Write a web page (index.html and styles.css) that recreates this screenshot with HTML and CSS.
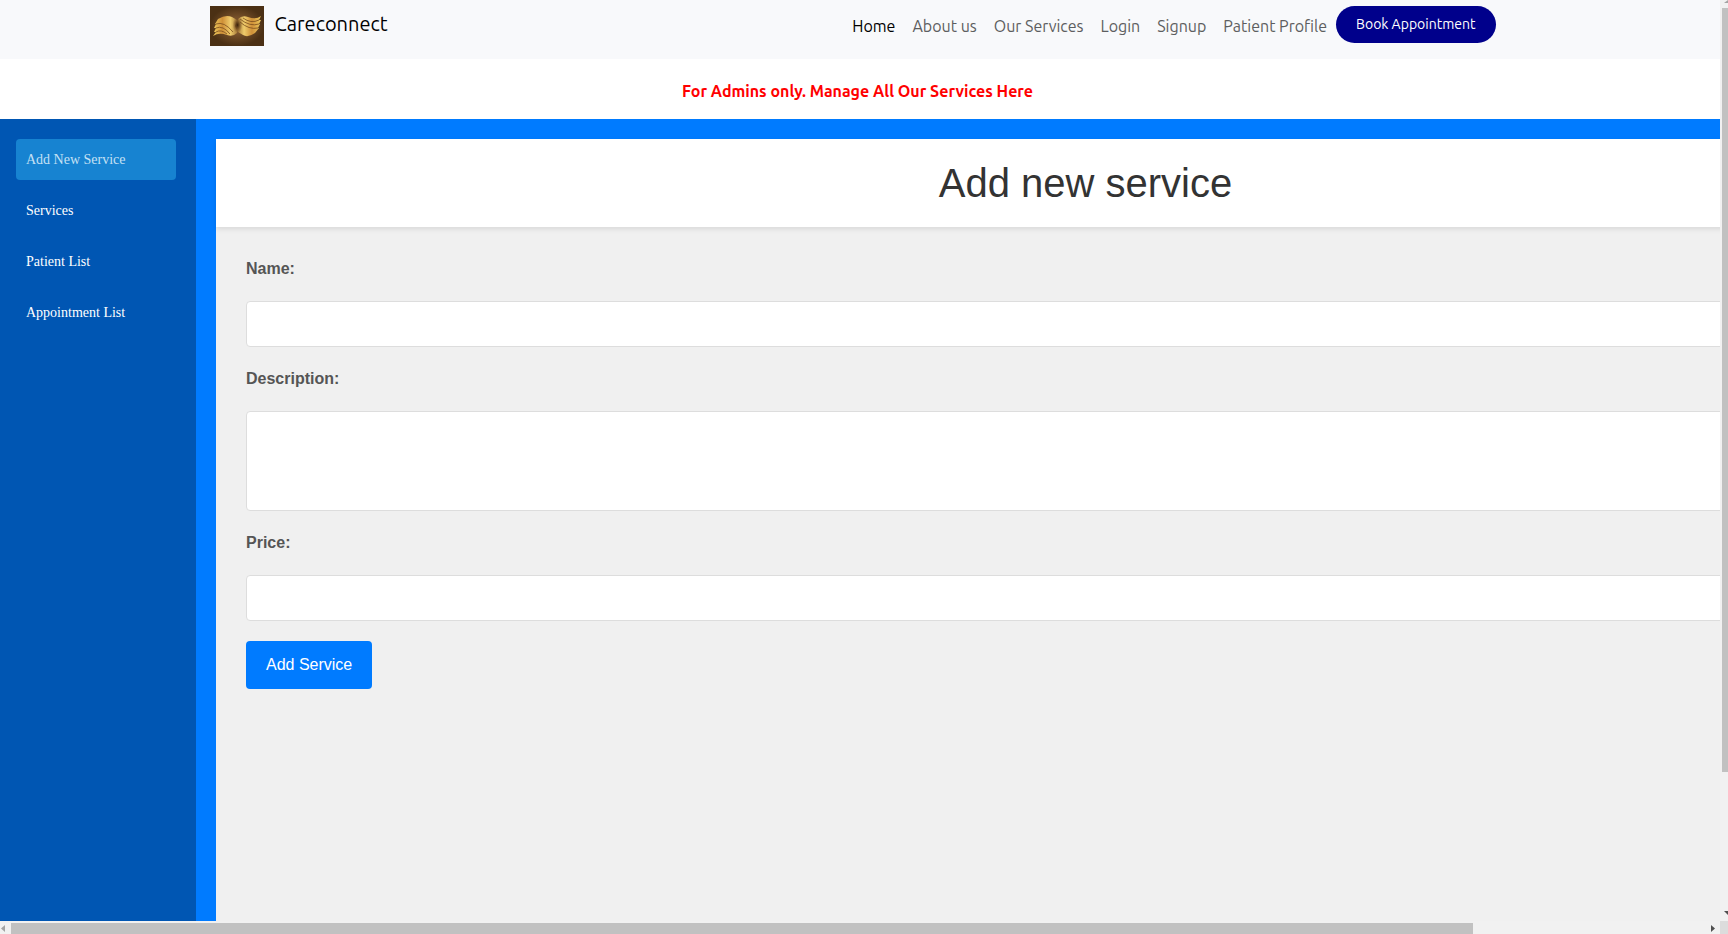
FILE: index.html
```html
<!DOCTYPE html>
<html lang="en">
<head>
<meta charset="utf-8">
<title>Careconnect - Add new service</title>
<link rel="stylesheet" href="styles.css">
</head>
<body>
<div class="window">
  <div class="page">
    <header class="topbar">
      <div class="topbar-inner">
        <a class="brand" href="#">
          <svg class="brand-logo" viewBox="0 0 54 40" aria-hidden="true">
            <defs>
              <radialGradient id="glow"><stop offset="0" stop-color="#96683a"/><stop offset="1" stop-color="#4b3014"/></radialGradient>
              <linearGradient id="gold" x1="0" y1="0" x2="1" y2="0"><stop offset="0" stop-color="#edc95c"/><stop offset=".35" stop-color="#cf9038"/><stop offset=".65" stop-color="#efcc6c"/><stop offset="1" stop-color="#8a5a26"/></linearGradient>
              <linearGradient id="gold-back" x1="1" y1="0" x2="0" y2="0"><stop offset="0" stop-color="#edc95c"/><stop offset=".35" stop-color="#cf9038"/><stop offset=".65" stop-color="#efcc6c"/><stop offset="1" stop-color="#8a5a26"/></linearGradient>
              <radialGradient id="fold"><stop offset="0" stop-color="#3a210b"/><stop offset="1" stop-color="#6b431b" stop-opacity="0"/></radialGradient>
            </defs>
            <rect width="54" height="40" fill="url(#glow)"/>
            <path d="M3 30 6 26 4 26 6 22 4 22 6 18 5 18 8 13Q16 8 22 11L27 14 30 20 27 27Q23 31 17 29 9 26 3 30Z" fill="url(#gold)"/>
            <path d="M51 10 49 14 51 14 49 18 50 18 48 22 49 22 45 27Q38 32 33 29L28 26 25 20 28 13Q32 9 38 11 46 14 51 10Z" fill="url(#gold-back)"/>
            <ellipse cx="27.500" cy="19" rx="5" ry="8" fill="url(#fold)"/>
            <path d="M6 18Q14 15 23 26M6 22Q13 19 20 28M6 26Q11 23 17 28M49 14Q41 18 33 12M49 18Q40 21 30 13M48 22Q39 24 30 16" fill="none" stroke="#7a4d1d" stroke-width=".8"/>
          </svg>
          <span>Careconnect</span>
        </a>
        <nav class="nav">
          <a class="nav-link active" href="#">Home</a>
          <a class="nav-link" href="#">About us</a>
          <a class="nav-link" href="#">Our Services</a>
          <a class="nav-link" href="#">Login</a>
          <a class="nav-link" href="#">Signup</a>
          <a class="nav-link" href="#">Patient Profile</a>
          <button class="book" type="button">Book Appointment</button>
        </nav>
      </div>
    </header>
    <p class="notice">For Admins only. Manage All Our Services Here</p>
    <div class="admin">
      <aside class="sidebar">
        <a class="side-link current" href="#">Add New Service</a>
        <a class="side-link" href="#">Services</a>
        <a class="side-link" href="#">Patient List</a>
        <a class="side-link" href="#">Appointment List</a>
      </aside>
      <main class="content">
        <h1 class="title">Add new service</h1>
        <form class="form">
          <label class="label" for="name">Name:</label>
          <input class="field" id="name" type="text">
          <label class="label" for="description">Description:</label>
          <textarea class="field area" id="description"></textarea>
          <label class="label" for="price">Price:</label>
          <input class="field" id="price" type="text">
          <button class="submit" type="button">Add Service</button>
        </form>
      </main>
    </div>
  </div>
  <div class="bar-v" aria-hidden="true">
    <svg class="arrow-v" viewBox="0 0 8 8"><path d="M8 0 4 3H8Z" fill="#a3a3a3"/></svg>
    <div class="thumb-v"></div>
    <svg class="arrow-v end" viewBox="0 0 8 10"><path d="M4 0H8V4Z" fill="#505050"/></svg>
  </div>
  <div class="bar-h" aria-hidden="true">
    <svg class="arrow-h" viewBox="0 0 11 13"><path d="M5 4V11L1 7.500Z" fill="#a3a3a3"/></svg>
    <div class="thumb-h"></div>
    <svg class="arrow-h" viewBox="0 0 11 13"><path d="M2 4V11L6 7.500Z" fill="#505050"/></svg>
  </div>
  <div class="corner"></div>
</div>
</body>
</html>
```
FILE: styles.css
```css
* { box-sizing: border-box; }
body { margin: 0; font-family: Ubuntu, "Noto Sans", sans-serif; font-size: 16px; line-height: 24px; }
a { text-decoration: none; }
.window { display: grid; grid-template-columns: minmax(0, 1fr) 8px; grid-template-rows: minmax(0, 1fr) 13px; height: 100vh; overflow: hidden; }
.page { display: flex; flex-direction: column; overflow: hidden; background: #fff; }

.topbar { background: #f8f9fb; padding: 6px 5px 13px 0; }
.topbar-inner { display: flex; justify-content: space-between; align-items: flex-start; max-width: 1296px; margin: 0 auto; }
.brand { display: flex; gap: 11px; color: #000; font-size: 20px; line-height: 36px; }
.brand-logo { width: 54px; height: 40px; }
.nav { display: flex; align-items: flex-start; gap: 1px; padding-right: 10px; }
.nav-link { padding: 8px; color: #5d5e60; }
.nav-link.active { color: #000; }
.book { border: 0; border-radius: 20px; padding: 8px 20px; background: #00008b; color: #fff; font: 14px/21px Ubuntu, "Noto Sans", sans-serif; }

.notice { margin: 0; padding: 20px 5px 16px 0; text-align: center; color: #f00; font-weight: 700; }

.admin { flex: 1; display: flex; background: #007bff; min-height: 0; }
.sidebar { flex: none; width: 196px; padding: 20px 20px 20px 16px; display: flex; flex-direction: column; gap: 10px; background: #0056b3; }
.side-link { padding: 10px; border-radius: 4px; color: #fff; font: 14px/21px "Liberation Serif", serif; }
.side-link.current { background: #1783d1; color: #c5e0f4; }
.content { flex: 0 0 calc(100% + 19px); margin: 20px 0 0 20px; background: #f0f0f0; font-family: "Liberation Sans", sans-serif; }
.title { margin: 0; padding: 20px; background: #fff; color: #333; text-align: center; font-size: 40px; font-weight: 400; line-height: 48px; box-shadow: 0 2px 5px rgba(0, 0, 0, .1); }
.form { display: flex; flex-direction: column; align-items: flex-start; gap: 20px; padding: 30px; }
.label { color: #555; font-weight: 700; }
.field { width: 100%; height: 46px; padding: 10px; border: 1px solid #ddd; border-radius: 4px; background: #fff; font: 16px/24px "Liberation Sans", sans-serif; }
.area { height: 100px; resize: none; }
.submit { border: 0; border-radius: 4px; padding: 12px 20px; background: #007bff; color: #fff; font: 16px/24px "Liberation Sans", sans-serif; }

.bar-v { display: flex; flex-direction: column; background: #f1f1f1; padding-left: 2px; }
.arrow-v { flex: none; width: 8px; height: 8px; margin-left: -2px; }
.arrow-v.end { margin-top: auto; height: 10px; }
.thumb-v { height: 83%; background: #c1c1c1; }
.bar-h { display: flex; background: #f1f1f1; padding-top: 2px; }
.arrow-h { flex: none; width: 11px; height: 13px; margin-top: -2px; }
.arrow-h:last-child { margin-left: auto; }
.thumb-h { width: 85%; background: #c1c1c1; }
.corner { background: #dcdcdc; }
```
